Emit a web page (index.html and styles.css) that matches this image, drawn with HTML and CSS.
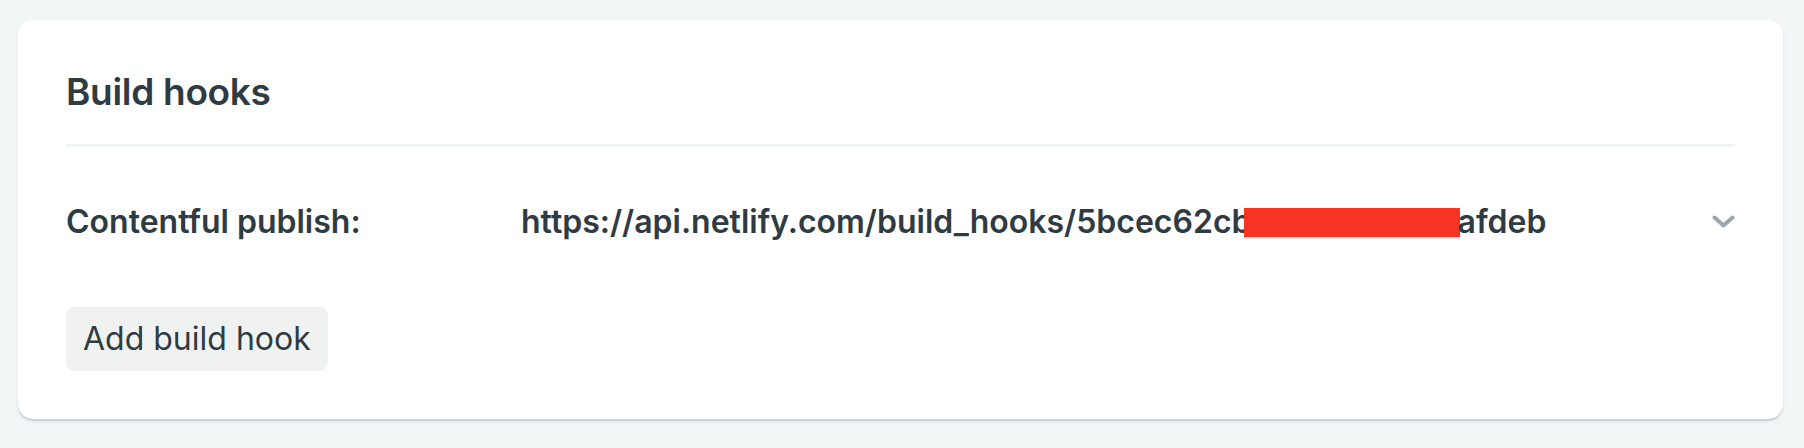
FILE: index.html
```html
<!DOCTYPE html>
<html lang="en">
<head>
<meta charset="utf-8">
<title>Build hooks</title>
<link rel="stylesheet" href="styles.css">
</head>
<body>
<section class="card">
  <h2 class="card-title">Build hooks</h2>
  <div class="hook-row">
    <span class="hook-label">Contentful publish:</span>
    <span class="hook-url">https://api.netlify.com/build_hooks/5bcec62cb<span class="redact" aria-hidden="true"></span>afdeb</span>
    <button class="chevron" aria-label="Expand">
      <svg width="23" height="13" viewBox="0 0 23 13"><path d="M2.5 2.5 L11.5 10.5 L20.5 2.5" fill="none" stroke="#97a7ab" stroke-width="4" stroke-linecap="round" stroke-linejoin="round"/></svg>
    </button>
  </div>
  <button class="btn">Add build hook</button>
</section>
</body>
</html>
```
FILE: styles.css
```css
* { box-sizing: border-box; }
html, body { margin: 0; }
body {
  background: #f3f6f6;
  padding: 20px 21px 28px 18px;
  font-family: Inter, "Noto Sans", "Liberation Sans", sans-serif;
  color: #2f3b42;
}
.card {
  background: #fff;
  border-radius: 15px;
  box-shadow: 0 2px 1px rgba(160, 180, 188, 0.45), 0 3px 4px rgba(160, 180, 188, 0.18);
  padding: 48px;
}
.card-title {
  margin: 0;
  font-size: 37px;
  font-weight: 600;
  letter-spacing: -0.3px;
  line-height: 48px;
  padding-bottom: 28px;
  border-bottom: 3px solid #f1f4f5;
}
.hook-row {
  display: grid;
  grid-template-columns: 455px 1fr auto;
  align-items: center;
  margin-top: 55px;
  font-size: 32px;
  font-weight: 600;
  line-height: 39px;
}
.hook-url { white-space: nowrap; }
.redact {
  display: inline-block;
  width: 216px;
  height: 29px;
  margin-left: -8px;
  margin-right: -2px;
  background: #f73324;
  vertical-align: -4px;
  box-shadow: 0 2px 0 #e4e6e6;
}
.chevron {
  border: 0;
  background: none;
  padding: 0;
  display: flex;
  align-items: center;
  height: 13px;
}
.btn {
  margin-top: 66px;
  display: block;
  height: 64px;
  padding: 0 17px;
  border: 0;
  border-radius: 8px;
  background: #f0f2f2;
  color: #2f3b42;
  font-family: inherit;
  font-size: 32px;
  font-weight: 400;
  line-height: 64px;
}
```
